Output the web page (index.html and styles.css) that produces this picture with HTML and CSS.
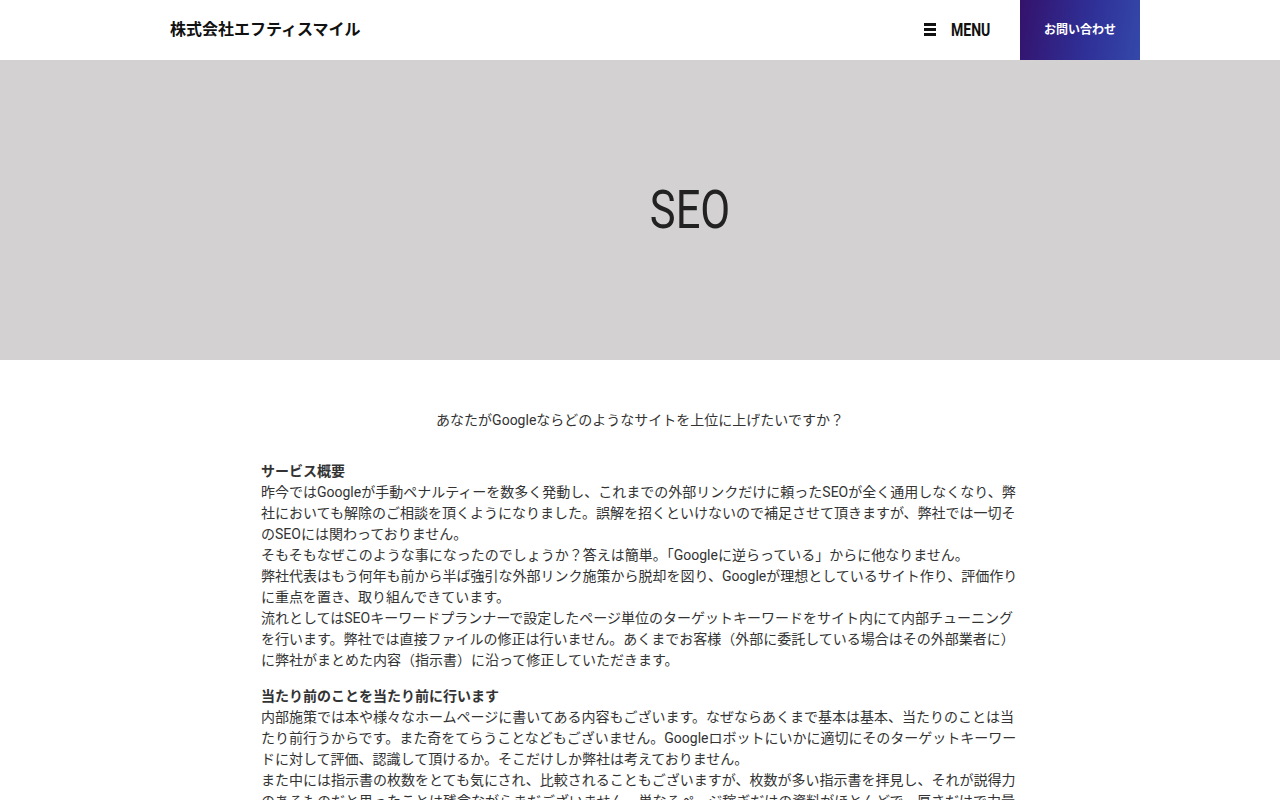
FILE: index.html
```html
<!DOCTYPE html>
<html lang="ja">
<head>
  <meta charset="UTF-8" />
  <meta name="viewport" content="width=device-width, initial-scale=1.0" />
  <title>SEO | 株式会社エフティスマイル</title>
  <link rel="stylesheet" href="styles.css">
</head>
<body>
  <header class="site-header">
    <div class="logo">株式会社エフティスマイル</div>
    <nav class="header-nav">
      <button class="menu-button">
        <svg class="menu-icon" width="12" height="13" viewBox="0 0 12 13">
          <rect x="0" y="0" width="12" height="3" fill="#111" />
          <rect x="0" y="5" width="12" height="3" fill="#111" />
          <rect x="0" y="10" width="12" height="3" fill="#111" />
        </svg>
        <span class="menu-label">MENU</span>
      </button>
      <a class="contact-button" href="#">お問い合わせ</a>
    </nav>
  </header>

  <section class="page-hero">
    <h1>SEO</h1>
  </section>

  <main class="content">
    <p class="lead">あなたがGoogleならどのようなサイトを上位に上げたいですか？</p>

    <div class="block">
      <h2>サービス概要</h2>
      <p>昨今ではGoogleが手動ペナルティーを数多く発動し、これまでの外部リンクだけに頼ったSEOが全く通用しなくなり、弊社においても解除のご相談を頂くようになりました。誤解を招くといけないので補足させて頂きますが、弊社では一切そのSEOには関わっておりません。</p>
      <p>そもそもなぜこのような事になったのでしょうか？答えは簡単。「Googleに逆らっている」からに他なりません。</p>
      <p>弊社代表はもう何年も前から半ば強引な外部リンク施策から脱却を図り、Googleが理想としているサイト作り、評価作りに重点を置き、取り組んできています。</p>
      <p>流れとしてはSEOキーワードプランナーで設定したページ単位のターゲットキーワードをサイト内にて内部チューニングを行います。弊社では直接ファイルの修正は行いません。あくまでお客様（外部に委託している場合はその外部業者に）に弊社がまとめた内容（指示書）に沿って修正していただきます。</p>
    </div>

    <div class="block">
      <h2>当たり前のことを当たり前に行います</h2>
      <p>内部施策では本や様々なホームページに書いてある内容もございます。なぜならあくまで基本は基本、当たりのことは当たり前行うからです。また奇をてらうことなどもございません。Googleロボットにいかに適切にそのターゲットキーワードに対して評価、認識して頂けるか。そこだけしか弊社は考えておりません。</p>
      <p>また中には指示書の枚数をとても気にされ、比較されることもございますが、枚数が多い指示書を拝見し、それが説得力のあるものだと思ったことは残念ながらまだございません。単なるページ稼ぎだけの資料がほとんどで、厚さだけで力量を判断するのは危険です。</p>
    </div>
  </main>
</body>
</html>
```

FILE: styles.css
```css
body {
  font-family: Roboto, "Noto Sans CJK JP", sans-serif;
  color: #333;
  background-color: #fff;
  margin: 0;
  padding: 0;
}
.site-header {
  height: 60px;
  display: flex;
  align-items: center;
  justify-content: space-between;
  padding: 0 140px 0 170px;
  background-color: #fff;
}
.logo {
  font-family: "Noto Sans CJK JP", sans-serif;
  font-size: 16px;
  font-weight: bold;
  color: #111;
  padding-bottom: 4px;
}
.header-nav {
  display: flex;
  align-items: center;
  height: 100%;
}
.menu-button {
  display: flex;
  align-items: center;
  gap: 15px;
  background: none;
  border: none;
  padding: 0 0 2px;
  margin-right: 30px;
  cursor: pointer;
  font-family: Roboto, sans-serif;
  font-size: 18px;
  font-weight: bold;
  color: #111;
}
.menu-icon {
  display: block;
}
.menu-label {
  display: inline-block;
  width: 39px;
  transform: scaleX(0.78);
  transform-origin: left center;
  white-space: nowrap;
}
.contact-button {
  width: 120px;
  height: 60px;
  box-sizing: border-box;
  padding-bottom: 3px;
  display: flex;
  align-items: center;
  justify-content: center;
  background: linear-gradient(100deg, #34126c 0%, #2f2f96 55%, #3448aa 100%);
  color: #fff;
  font-family: "Noto Sans CJK JP", sans-serif;
  font-size: 12px;
  font-weight: bold;
  text-decoration: none;
}
.page-hero {
  height: 300px;
  background-color: #d3d1d2;
  display: flex;
  align-items: center;
  justify-content: center;
  padding-left: 100px;
}
.page-hero h1 {
  margin: 0;
  font-family: Roboto, sans-serif;
  font-size: 53px;
  font-weight: normal;
  color: #222;
  transform: scaleX(0.82);
}
.content {
  width: 758px;
  margin: 0 auto;
  padding: 50px 0 40px;
  font-size: 14px;
  line-height: 21px;
}
.lead {
  text-align: center;
  margin: 0 0 30px;
}
.block {
  margin-bottom: 15px;
}
.block h2 {
  font-size: 14px;
  font-weight: bold;
  margin: 0;
  line-height: 21px;
}
.block p {
  margin: 0;
}
```
